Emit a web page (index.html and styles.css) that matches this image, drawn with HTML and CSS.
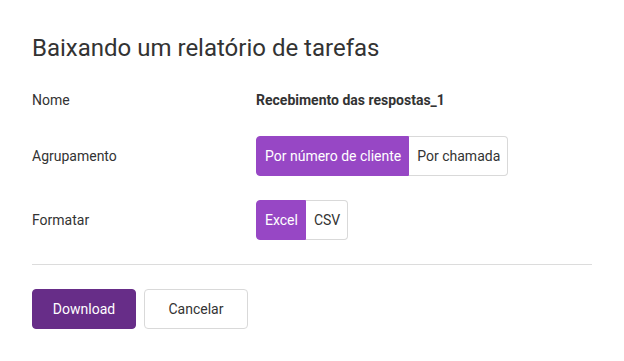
FILE: index.html
```html
<!DOCTYPE html>
<html lang="pt">
<head>
<meta charset="utf-8">
<link rel="stylesheet" href="styles.css">
</head>
<body>
<div class="dialog">
  <h1 class="title">Baixando um relatório de tarefas</h1>
  <div class="form">
    <div class="row row-name">
      <div class="label">Nome</div>
      <div class="value strong">Recebimento das respostas_1</div>
    </div>
    <div class="row row-group">
      <div class="label">Agrupamento</div>
      <div class="seg">
        <button class="seg-btn active">Por número de cliente</button>
        <button class="seg-btn">Por chamada</button>
      </div>
    </div>
    <div class="row row-format">
      <div class="label">Formatar</div>
      <div class="seg">
        <button class="seg-btn active">Excel</button>
        <button class="seg-btn">CSV</button>
      </div>
    </div>
  </div>
  <hr class="divider">
  <div class="actions">
    <button class="btn primary">Download</button>
    <button class="btn secondary">Cancelar</button>
  </div>
</div>
</body>
</html>
```

FILE: styles.css
```css
* { box-sizing: border-box; }
html, body { margin: 0; padding: 0; background: #fff; }
body {
  font-family: Roboto, "Liberation Sans", Arial, sans-serif;
  color: #333;
  font-size: 14px;
}
.dialog {
  padding: 32px 32px 0 32px;
}
.title {
  margin: 0;
  font-size: 24px;
  font-weight: 400;
  line-height: 32px;
  color: #333;
}
.form {
  margin-top: 16px;
  display: flex;
  flex-direction: column;
}
.row {
  display: grid;
  grid-template-columns: 224px 1fr;
  align-items: center;
  height: 40px;
}
.row-group { margin-top: 16px; }
.row-format { margin-top: 24px; }
.label { font-size: 14px; color: #333; }
.value.strong { font-weight: 700; color: #333; }
.seg {
  display: inline-flex;
  justify-self: start;
  height: 40px;
}
.seg-btn {
  font-family: inherit;
  font-size: 14px;
  color: #333;
  background: #fff;
  border: 1px solid #d9d9d9;
  padding: 0 7px 0 8px;
  height: 40px;
  margin: 0;
  cursor: pointer;
}
.seg-btn:first-child { border-radius: 4px 0 0 4px; }
.seg-btn:last-child { border-radius: 0 4px 4px 0; border-left: none; }
.seg-btn.active {
  background: #9747c5;
  border-color: #9747c5;
  color: #fff;
}
.divider {
  margin: 24px 0 0 0;
  border: none;
  border-top: 1px solid #dcdcdc;
  height: 0;
}
.actions {
  display: flex;
  gap: 8px;
  margin-top: 24px;
}
.btn {
  font-family: inherit;
  font-size: 14px;
  width: 104px;
  height: 40px;
  border-radius: 4px;
  cursor: pointer;
}
.btn.primary {
  background: #672d88;
  border: 1px solid #672d88;
  color: #fff;
}
.btn.secondary {
  background: #fff;
  border: 1px solid #d9d9d9;
  color: #333;
}
```
